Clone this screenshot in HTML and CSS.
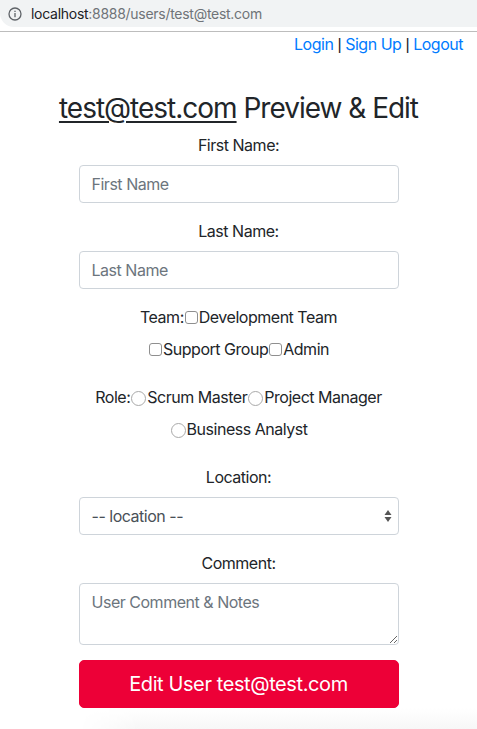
FILE: index.html
```html
<!DOCTYPE html>
<html lang="en">
<head>
<meta charset="utf-8">
<title>Preview &amp; Edit</title>
<link rel="stylesheet" href="styles.css">
</head>
<body>
<div class="browser-bar">
  <div class="url-field">
    <svg class="info-icon" width="14" height="14" viewBox="0 0 14 14" aria-hidden="true">
      <circle cx="7" cy="7" r="6" fill="none" stroke="#5f6368" stroke-width="1.3"/>
      <rect x="6.35" y="6" width="1.3" height="4.2" fill="#5f6368"/>
      <rect x="6.35" y="3.7" width="1.3" height="1.3" fill="#5f6368"/>
    </svg>
    <span class="url-host">localhost</span><span class="url-rest">:8888/users/test@test.com</span>
  </div>
</div>
<nav class="top-nav">
  <a href="#">Login</a> <span class="sep">|</span> <a href="#">Sign Up</a> <span class="sep">|</span> <a href="#">Logout</a>
</nav>
<main class="container">
  <h3 class="page-title"><a href="#" class="title-link">test@test.com</a> Preview &amp; Edit</h3>
  <form class="user-form">
    <div class="form-group">
      <label for="first">First Name:</label>
      <input id="first" class="form-control" type="text" placeholder="First Name">
    </div>
    <div class="form-group">
      <label for="last">Last Name:</label>
      <input id="last" class="form-control" type="text" placeholder="Last Name">
    </div>
    <div class="form-group options">
      <div class="opt-line">
        <span>Team:</span><span class="opt"><span class="box"></span>Development Team</span>
      </div>
      <div class="opt-line">
        <span class="opt"><span class="box"></span>Support Group</span><span class="opt"><span class="box"></span>Admin</span>
      </div>
    </div>
    <div class="form-group options">
      <div class="opt-line">
        <span>Role:</span><span class="opt"><span class="radio"></span>Scrum Master</span><span class="opt"><span class="radio"></span>Project Manager</span>
      </div>
      <div class="opt-line">
        <span class="opt"><span class="radio"></span>Business Analyst</span>
      </div>
    </div>
    <div class="form-group">
      <label for="loc">Location:</label>
      <select id="loc" class="form-control select">
        <option>-- location --</option>
      </select>
    </div>
    <div class="form-group">
      <label for="comment">Comment:</label>
      <textarea id="comment" class="form-control textarea" rows="2" placeholder="User Comment &amp; Notes"></textarea>
    </div>
    <button type="button" class="btn-edit">Edit User test@test.com</button>
  </form>
  <div class="bottom-fade"></div>
</main>
</body>
</html>
```

FILE: styles.css
```css
* { box-sizing: border-box; }

html, body {
  margin: 0;
  padding: 0;
  background: #fff;
}

body {
  font-family: "Inter", "Liberation Sans", sans-serif;
  font-size: 16px;
  line-height: 24px;
  letter-spacing: -0.03em;
  color: #212529;
  overflow: hidden;
  height: 729px;
}

.browser-bar {
  height: 32px;
  border-bottom: 1px solid #bdbdbd;
  padding-bottom: 4px;
}

.url-field {
  height: 27px;
  background: #f1f3f4;
  border-bottom-left-radius: 14px;
  display: flex;
  align-items: center;
  padding-left: 8px;
  font-size: 14px;
  letter-spacing: -0.02em;
}

.info-icon {
  margin-right: 9px;
  flex: none;
}

.url-host { color: #202124; }
.url-rest { color: #6f7378; }

.top-nav {
  height: 24px;
  text-align: right;
  padding: 0 14px 0 0;
  line-height: 24px;
  color: #212529;
}

.top-nav a {
  color: #007bff;
  text-decoration: none;
}

.top-nav .sep {
  color: #212529;
  font-family: "Liberation Sans", sans-serif;
}

.container {
  width: 320px;
  margin: 0 auto;
  text-align: center;
}

.page-title {
  margin: 35px -60px 8px;
  font-size: 28px;
  line-height: 34px;
  font-weight: 400;
  letter-spacing: -0.036em;
  white-space: nowrap;
}

.title-link {
  color: #212529;
  text-decoration: underline;
  text-underline-offset: 3px;
  text-decoration-thickness: 2px;
}

.form-group {
  margin-bottom: 16px;
}

.form-group label {
  display: block;
  margin-bottom: 8px;
}

.form-control {
  display: block;
  width: 100%;
  height: 38px;
  padding: 6px 12px;
  font-family: inherit;
  font-size: 16px;
  line-height: 24px;
  letter-spacing: -0.03em;
  color: #495057;
  background: #fff;
  border: 1px solid #ced4da;
  border-radius: 4px;
  text-align: left;
}

.form-control::placeholder {
  color: #6c757d;
}

.select {
  appearance: none;
  -webkit-appearance: none;
  background-image: url("data:image/svg+xml;utf8,<svg xmlns='http://www.w3.org/2000/svg' width='8' height='14' viewBox='0 0 8 14'><path d='M4 1 L7.5 6 L0.5 6 Z' fill='%23555'/><path d='M4 13 L7.5 8 L0.5 8 Z' fill='%23555'/></svg>");
  background-repeat: no-repeat;
  background-position: right 6px center;
  background-size: 8px 14px;
  color: #495057;
}

.textarea {
  height: 62px;
  resize: vertical;
}

.options {
  margin-bottom: 24px;
}

.opt-line {
  display: flex;
  justify-content: center;
  align-items: center;
  height: 24px;
  margin-bottom: 8px;
}

.opt-line:last-child {
  margin-bottom: 0;
}

.opt {
  display: inline-flex;
  align-items: center;
}

.box {
  display: inline-block;
  width: 13px;
  height: 13px;
  border: 1px solid #8f8f8f;
  border-radius: 3px;
  background: #fff;
  margin: 0 1px 0 1px;
}

.radio {
  display: inline-block;
  width: 15px;
  height: 15px;
  border: 1px solid #a9a9a9;
  border-radius: 50%;
  background: #fff;
  margin: 2px 1px 0 1px;
}

.btn-edit {
  display: block;
  width: 100%;
  height: 48px;
  margin-top: -1px;
  padding: 8px 16px;
  font-family: inherit;
  font-size: 20px;
  line-height: 30px;
  letter-spacing: -0.02em;
  color: #fff;
  background: #ed0037;
  border: 1px solid #ed0037;
  border-radius: 5px;
  cursor: pointer;
}

.bottom-fade {
  height: 21px;
  margin: 0 -80px 0 0;
  background: linear-gradient(to bottom, #fff 0%, #f7f7f7 100%);
  -webkit-mask-image: linear-gradient(to right, transparent 0, #000 60px);
  mask-image: linear-gradient(to right, transparent 0, #000 60px);
}
```
